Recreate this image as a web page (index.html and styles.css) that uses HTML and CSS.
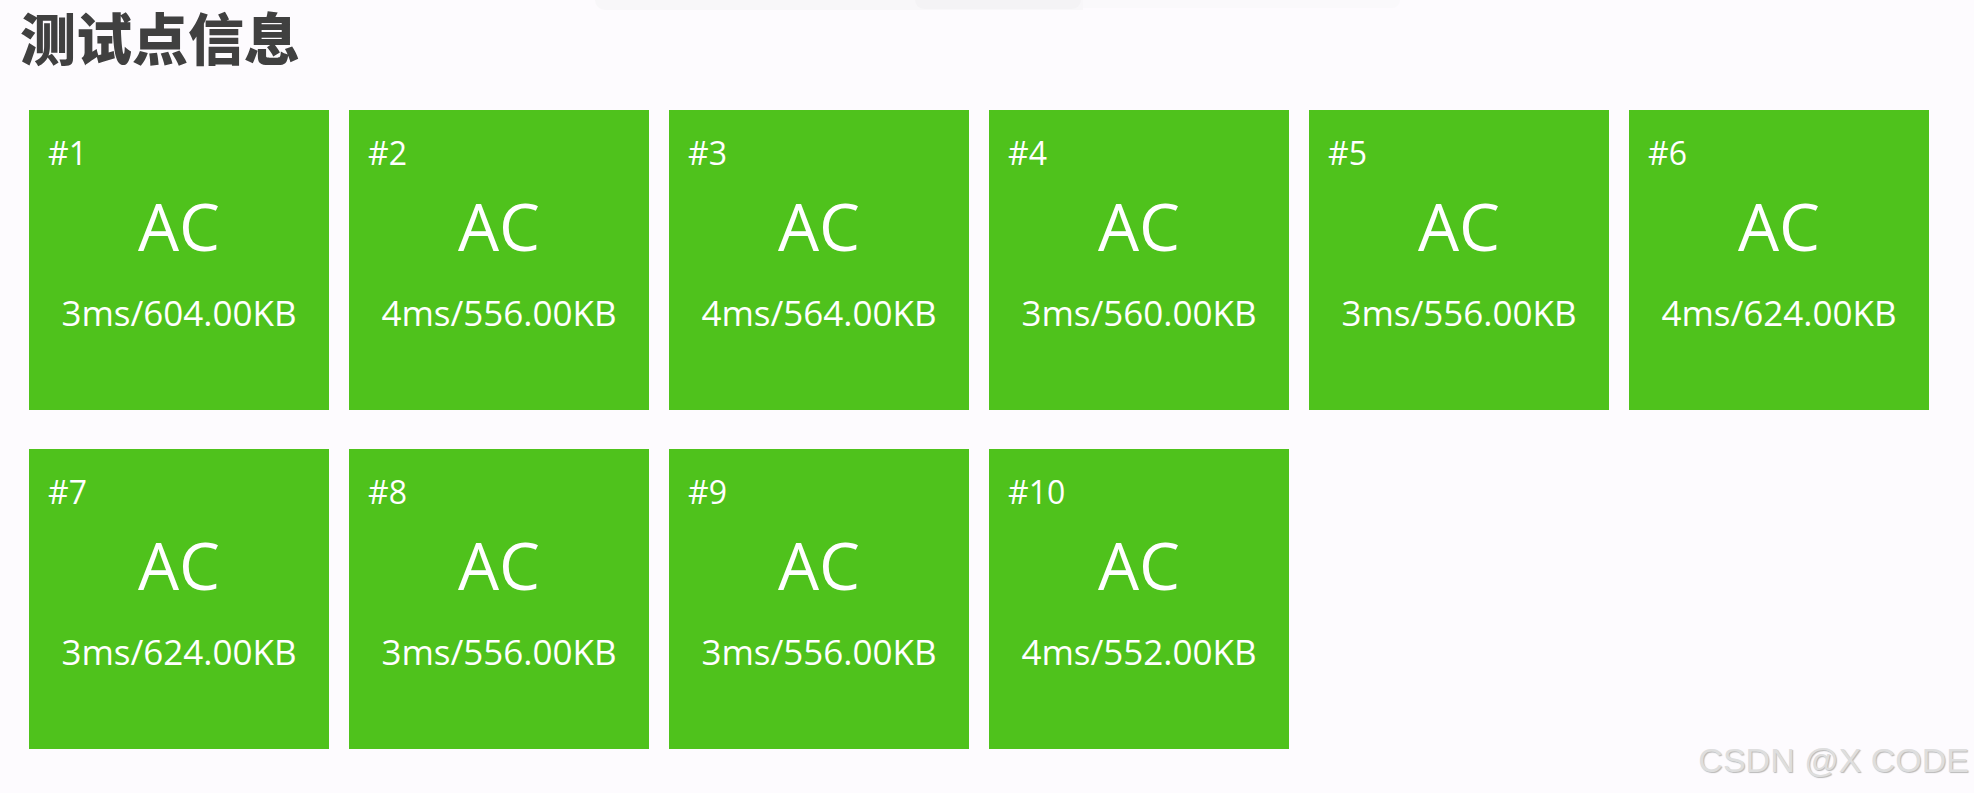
FILE: index.html
```html
<!DOCTYPE html>
<html lang="zh-CN">
<head>
<meta charset="utf-8">
<title>测试点信息</title>
<link rel="stylesheet" href="styles.css">
</head>
<body>
<div class="toolbar-remnant" aria-hidden="true">
  <div class="tb-a"><div class="tb-b"></div></div>
  <div class="tb-c"></div>
</div>
<main class="page">
  <h1 class="title">测试点信息</h1>
  <div class="grid">
    <div class="card"><div class="num">#1</div><div class="verdict">AC</div><div class="stats">3ms/604.00KB</div></div>
    <div class="card"><div class="num">#2</div><div class="verdict">AC</div><div class="stats">4ms/556.00KB</div></div>
    <div class="card"><div class="num">#3</div><div class="verdict">AC</div><div class="stats">4ms/564.00KB</div></div>
    <div class="card"><div class="num">#4</div><div class="verdict">AC</div><div class="stats">3ms/560.00KB</div></div>
    <div class="card"><div class="num">#5</div><div class="verdict">AC</div><div class="stats">3ms/556.00KB</div></div>
    <div class="card"><div class="num">#6</div><div class="verdict">AC</div><div class="stats">4ms/624.00KB</div></div>
    <div class="card"><div class="num">#7</div><div class="verdict">AC</div><div class="stats">3ms/624.00KB</div></div>
    <div class="card"><div class="num">#8</div><div class="verdict">AC</div><div class="stats">3ms/556.00KB</div></div>
    <div class="card"><div class="num">#9</div><div class="verdict">AC</div><div class="stats">3ms/556.00KB</div></div>
    <div class="card"><div class="num">#10</div><div class="verdict">AC</div><div class="stats">4ms/552.00KB</div></div>
  </div>
</main>
<div class="watermark">CSDN @X CODE</div>
</body>
</html>
```

FILE: styles.css
```css
html, body {
  margin: 0;
  padding: 0;
}
body {
  background: #fdfbfe;
  width: 1974px;
  height: 793px;
  overflow: hidden;
  position: relative;
  font-family: "Open Sans", "Noto Sans", sans-serif;
}

/* scrolled-off floating toolbar peeking from the top edge */
.toolbar-remnant {
  position: absolute;
  top: 0;
  left: 595px;
  display: flex;
  align-items: flex-start;
}
.tb-a {
  width: 488px;
  height: 10px;
  background: #f8f7f9;
  border-radius: 0 0 0 10px;
  display: flex;
  justify-content: flex-end;
}
.tb-b {
  width: 166px;
  height: 9px;
  margin-right: 2px;
  background: #f4f3f5;
  border-radius: 0 0 9px 9px;
}
.tb-c {
  width: 317px;
  height: 8px;
  background: #faf9fb;
  border-radius: 0 0 8px 0;
}

.page {
  padding: 0 0 0 20px;
}
.title {
  margin: 0 0 38px;
  font-family: "Noto Sans CJK SC", sans-serif;
  font-weight: 900;
  font-size: 56px;
  line-height: 72px;
  color: #404040;
}
.grid {
  margin-left: 9px;
  display: grid;
  grid-template-columns: repeat(6, 300px);
  grid-auto-rows: 300px;
  column-gap: 20px;
  row-gap: 39px;
}
.card {
  background: #4fc21c;
  color: #ffffff;
  padding: 23px 19px 0;
  box-sizing: border-box;
  display: flex;
  flex-direction: column;
}
.num {
  font-size: 32px;
  line-height: 40px;
}
.verdict {
  margin-top: 13px;
  font-size: 65px;
  line-height: 80px;
  text-align: center;
}
.stats {
  margin-top: 24px;
  font-size: 35px;
  line-height: 46px;
  text-align: center;
}

.watermark {
  position: absolute;
  right: 5px;
  bottom: 15px;
  font-family: "Liberation Sans", Arial, sans-serif;
  font-size: 34px;
  line-height: 35px;
  color: #dedede;
  text-shadow: 1px 1px 1px #b8b8b8;
}
```
